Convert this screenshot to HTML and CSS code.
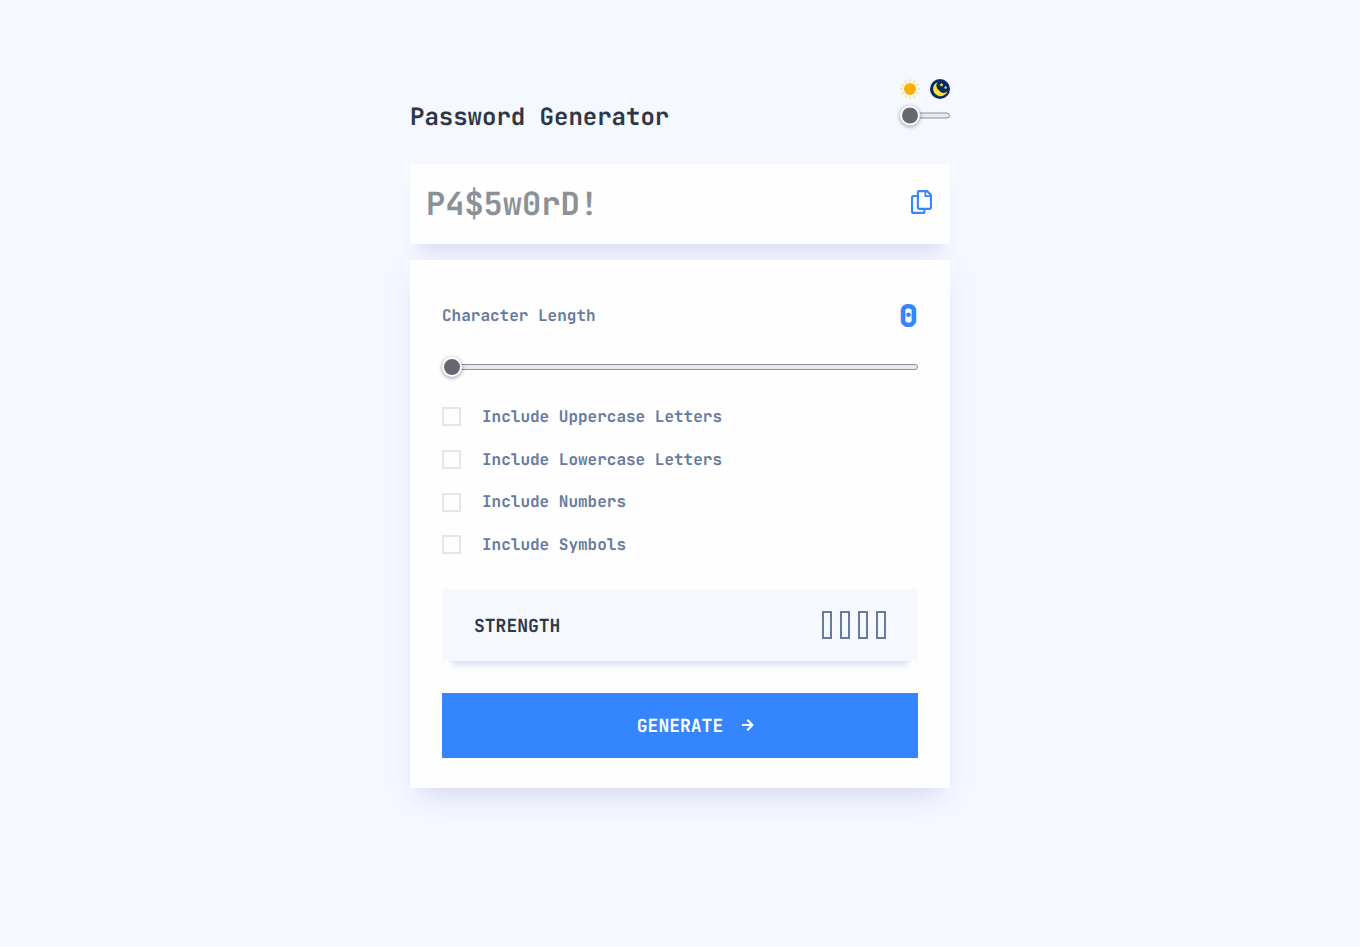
FILE: index.html
```html
<!DOCTYPE html>
<html lang="en">
<head>
<meta charset="utf-8">
<title>Password Generator</title>
<link rel="stylesheet" href="styles.css">
</head>
<body>
<main class="app">
  <header class="header">
    <h1 class="title">Password Generator</h1>
    <div class="theme">
      <div class="theme-icons">
        <svg width="20" height="20" viewBox="0 0 20 20"><g stroke="#ffdf80" stroke-width="1.5" stroke-linecap="round"><path d="M10 .8v1.4M10 17.8v1.4M.8 10h1.4M17.8 10h1.4M5.4 2l.7 1.2M13.9 16.8l.7 1.2M2 5.4l1.2.7M16.8 13.9l1.2.7M14.6 2l-.7 1.2M6.1 16.8L5.4 18M18 5.4l-1.2.7M3.2 13.9l-1.2.7"/></g><circle cx="10" cy="10" r="6" fill="#fbb003"/></svg>
        <svg width="20" height="20" viewBox="0 0 20 20"><circle cx="10" cy="10" r="10" fill="#06296b"/><path d="M7.800 2.900A7.400 7.400 0 1 0 17.500 12.300A5.300 5.300 0 0 1 9 11.200A5.300 5.300 0 0 1 7.800 2.900Z" fill="#ffe135"/><path d="M11.500 3.800l.6 1.300 1.400.2-1 .9.2 1.400-1.200-.7-1.200.7.2-1.400-1-.9 1.400-.2zM15.600 6.800l.5 1 1.100.2-.8.800.2 1.100-1-.5-1 .5.2-1.100-.8-.8 1.100-.2z" fill="#ffe135"/></svg>
      </div>
      <div class="slider small"><span class="thumb"></span></div>
    </div>
  </header>
  <section class="password">
    <span class="placeholder">P4$5w0rD!</span>
    <svg class="copy" width="21" height="24" viewBox="0 0 22 24" preserveAspectRatio="none" fill="none" stroke="#3585ff" stroke-width="2.200" stroke-linejoin="round"><path d="M7 6H2.600Q1.100 6 1.100 7.500V21.400Q1.100 22.900 2.600 22.900H12.500Q14 22.900 14 21.400V19"/><path d="M8.500 1.100H17L20.900 5V17.500Q20.900 18.800 19.600 18.800H8.500Q7.200 18.800 7.200 17.500V2.400Q7.200 1.100 8.500 1.100Z"/><path d="M15 1.500V6.200H20.500" stroke-width="1.800"/></svg>
  </section>
  <section class="card">
    <div class="length"><span class="label">Character Length</span><span class="count">0</span></div>
    <div class="slider wide"><span class="thumb"></span></div>
    <div class="options">
      <label class="option"><span class="box"></span>Include Uppercase Letters</label>
      <label class="option"><span class="box"></span>Include Lowercase Letters</label>
      <label class="option"><span class="box"></span><span class="raised">Include Numbers</span></label>
      <label class="option"><span class="box"></span>Include Symbols</label>
    </div>
    <div class="strength"><span class="strength-label">STRENGTH</span><div class="bars"><i></i><i></i><i></i><i></i></div></div>
    <button class="generate"><span class="generate-label">GENERATE</span><svg width="12" height="12" viewBox="0 0 12 12" fill="none" stroke="#fff" stroke-width="2"><path d="M0 6h10M5.300 .8L10.500 6l-5.200 5.200"/></svg></button>
  </section>
</main>
</body>
</html>
```
FILE: styles.css
```css
*, *::before { box-sizing: border-box; }
body {
  margin: 0;
  height: 947px;
  background: #f5f8ff;
  color: #2d3748;
  font-family: "JetBrains Mono", "DejaVu Sans Mono", monospace;
  font-weight: 700;
  text-rendering: geometricPrecision;
}
.app { width: 540px; margin: 0 auto; padding-top: 79px; }
.header { display: flex; justify-content: space-between; height: 85px; }
.title { margin: 0; padding-top: 23px; font-size: 24px; line-height: 32px; font-weight: 700; }
.theme { width: 50px; }
.theme-icons { display: flex; justify-content: space-between; height: 20px; margin-bottom: 6px; }
.slider {
  display: flex;
  align-items: center;
  height: 20px;
  position: relative;
}
.slider::before {
  content: "";
  flex: 1;
  height: 6px;
  border: 1px solid #8f8f9d;
  border-radius: 3px;
  background: #e9e9ed;
}
.small { transform: translateY(.5px); }
.thumb {
  position: absolute;
  left: 0;
  top: 0;
  width: 20px;
  height: 20px;
  border: 2px solid #fff;
  border-radius: 50%;
  background: #676774;
  box-shadow: 0 1px 4px rgba(0, 0, 0, .4);
}
.password {
  display: flex;
  align-items: center;
  justify-content: space-between;
  height: 80px;
  margin-bottom: 16px;
  padding: 0 18px 0 16px;
  background: #fefefe;
  box-shadow: 0 16px 20px -10px rgba(90, 105, 195, .2);
}
.placeholder { color: #8b9197; font-size: 32px; line-height: 40px; }
.copy { margin-top: -4px; }
.card {
  height: 528px;
  padding: 32px;
  background: #fefefe;
  box-shadow: 0 8px 28px rgba(100, 100, 230, .08), 0 20px 24px -14px rgba(70, 80, 160, .12);
}
.length { display: flex; align-items: center; justify-content: space-between; height: 46px; color: #667b9d; }
.label { font-size: 16px; }
.count { padding-top: 1px; color: #3585ff; font-size: 32px; line-height: 46px; font-weight: 800; text-rendering: auto; }
.wide { margin-top: 19px; }
.options { display: grid; grid-template-rows: 43px 43px 42.500px 42px; margin-top: 18px; }
.option { display: flex; align-items: center; gap: 21px; color: #667b9d; font-size: 16px; }
.raised { padding-bottom: 2px; }
.box { width: 19px; height: 19px; border: 2px solid #e5e6ec; }
.strength {
  display: flex;
  align-items: center;
  justify-content: space-between;
  height: 72px;
  margin-top: 23px;
  padding: 0 32px;
  background: #f5f8ff;
  font-size: 18px;
  box-shadow: 0 14px 6px -10px rgba(90, 105, 195, .22);
}
.strength-label { padding-top: 3px; }
.bars { display: flex; gap: 8px; }
.bars i { width: 10px; height: 28px; border: 2px solid #667b9d; }
.generate {
  display: flex;
  align-items: center;
  justify-content: center;
  gap: 19px;
  width: 100%;
  height: 65px;
  margin-top: 32px;
  padding: 0 0 0 31px;
  border: 0;
  background: #3585ff;
  color: #fff;
  font: 700 18px "JetBrains Mono", "DejaVu Sans Mono", monospace;
  text-rendering: geometricPrecision;
}
.generate-label { padding-top: 2px; }
```
